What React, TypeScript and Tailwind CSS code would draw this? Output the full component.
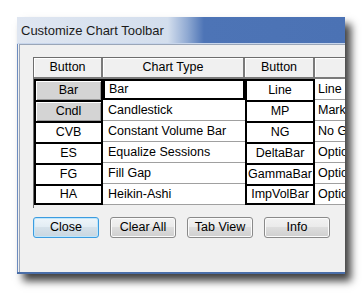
import React from "react";

const rows = [
  { b1: "Bar", t1: "Bar", b2: "Line", t2: "Line", raised: true, sel: true },
  { b1: "Cndl", t1: "Candlestick", b2: "MP", t2: "Market Profile", raised: true },
  { b1: "CVB", t1: "Constant Volume Bar", b2: "NG", t2: "No Gap" },
  { b1: "ES", t1: "Equalize Sessions", b2: "DeltaBar", t2: "Options Delta" },
  { b1: "FG", t1: "Fill Gap", b2: "GammaBar", t2: "Options Gamma" },
  { b1: "HA", t1: "Heikin-Ashi", b2: "ImpVolBar", t2: "Options Imp Vol" },
];

function HeaderCell({ w, label }: { w: string; label: string }) {
  return (
    <div
      className={`${w} h-full shrink-0 flex items-center justify-center bg-[#f0f0f0] border-r-2 border-b-2 border-[#7a7a7a] shadow-[inset_1px_1px_0_#ffffff]`}
    >
      {label}
    </div>
  );
}

function Btn({ label, focus }: { label: string; focus?: boolean }) {
  return (
    <button
      className={
        "w-[66px] h-[21px] rounded-[3px] border text-[12.5px] text-black leading-none flex items-center justify-center " +
        (focus
          ? "border-[#3c9ce0] shadow-[inset_0_0_0_1px_#bfe6fb] bg-[linear-gradient(#eef5fa,#e3edf4_45%,#d5e1ea_50%,#c9d6e0)]"
          : "border-[#8a8a8a] shadow-[inset_0_0_0_1px_#fbfbfb] bg-[linear-gradient(#f2f2f2,#ebebeb_45%,#dddddd_50%,#cfcfcf)]")
      }
    >
      {label}
    </button>
  );
}

export default function App() {
  return (
    <div className="w-[362px] h-[293px] bg-white pl-[17px] pt-[17px] overflow-hidden font-['Liberation_Sans',Arial,sans-serif] text-black">
      <div className="w-[328px] h-[257px] flex flex-col overflow-hidden bg-[#f0f0f0] border-b-2 border-[#4a6ea8] shadow-[6px_7px_8px_rgba(0,0,0,0.75)]">
        {/* title bar */}
        <div className="h-[27px] shrink-0 flex items-center pl-[4px] border-b border-[#c8d6ec] bg-[linear-gradient(90deg,#dfe6f1_0%,#d3deed_46%,#8fa9d2_52%,#4d74b6_57%,#4b72b4_100%)]">
          <span className="text-[13px] text-[#1b1b1b] leading-none">Customize Chart Toolbar</span>
        </div>

        <div className="flex-1 border-l border-[#6d8cc0] pl-px">
          <div className="h-full border-t border-l border-[#9aa6b8] pl-[13px] pt-[12px]">
            {/* grid */}
            <div className="w-[320px] h-[151px] border-t border-l border-[#6d6d6d] text-[12.5px]">
              <div className="h-[21px] flex">
                <HeaderCell w="w-[69px]" label="Button" />
                <HeaderCell w="w-[142px]" label="Chart Type" />
                <HeaderCell w="w-[70px]" label="Button" />
                <HeaderCell w="w-[60px]" label="" />
              </div>
              {rows.map((r, i) => {
                const last = i === rows.length - 1;
                return (
                  <div key={r.b1} className="h-[21px] flex">
                    <div
                      className={
                        "w-[69px] h-full shrink-0 border-l-2 border-r-2 border-t-2 border-black " +
                        (last ? "border-b-2 " : "") +
                        (r.raised ? "bg-[#d4d4d4]" : "bg-white")
                      }
                    >
                      <div
                        className={
                          "h-full flex items-center justify-center leading-none " +
                          (r.raised ? "shadow-[inset_1px_1px_0_#ffffff,inset_-1px_-1px_0_#9a9a9a]" : "")
                        }
                      >
                        {r.b1}
                      </div>
                    </div>
                    <div
                      className={
                        "w-[142px] h-full shrink-0 bg-white flex items-center leading-none whitespace-nowrap overflow-hidden " +
                        (r.sel ? "border-2 border-black pl-[4px]" : "border-b border-[#a0a0a0] pl-[5px]")
                      }
                    >
                      {r.t1}
                    </div>
                    <div
                      className={
                        "w-[70px] h-full shrink-0 bg-white border-l-2 border-r-2 border-t-2 border-black flex items-center " +
                        (last ? "border-b-2" : "")
                      }
                    >
                      <div className="w-full text-center whitespace-nowrap overflow-hidden leading-none">{r.b2}</div>
                    </div>
                    <div className="w-[60px] h-full shrink-0 bg-white border-b border-[#a0a0a0] pl-[3px] flex items-center leading-none whitespace-nowrap overflow-hidden">
                      {r.t2}
                    </div>
                  </div>
                );
              })}
            </div>

            {/* buttons */}
            <div className="mt-[9px] flex gap-[11px]">
              <Btn label="Close" focus />
              <Btn label="Clear All" />
              <Btn label="Tab View" />
              <Btn label="Info" />
            </div>
          </div>
        </div>
      </div>
    </div>
  );
}
